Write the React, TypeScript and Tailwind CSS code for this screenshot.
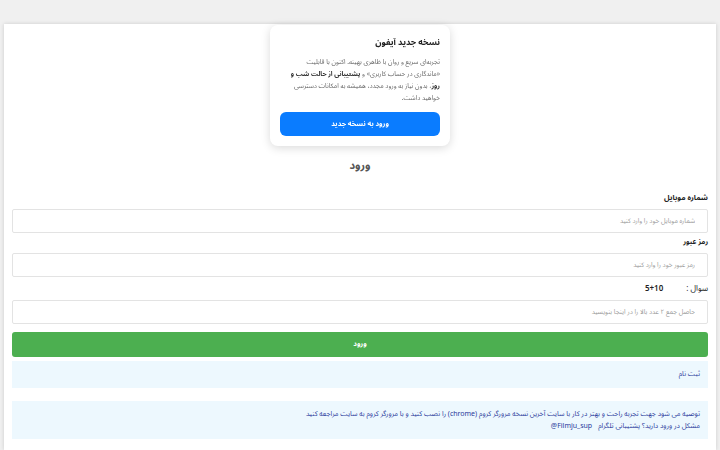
const App = () => {
   return (
      <div
         dir="rtl"
         className="min-h-screen bg-[#f0f0f0] px-1 pt-6 font-['Noto_Sans_Arabic','Noto_Naskh_Arabic','Vazirmatn','Tahoma','DejaVu_Sans',sans-serif] text-[#333]"
      >
         <div className="min-h-[426px] bg-white px-2 pt-[135px] shadow-[0_0_4px_rgba(0,0,0,0.15)]">
            <h1 className="h-[14px] text-center text-[11px] font-bold leading-[14px] text-[#555]">ورود</h1>

            <label className="mt-[19px] block h-[12px] text-[7.5px] font-bold leading-[12px] text-[#222]">شماره موبایل</label>
            <input
               className="mt-[5px] block h-[24px] w-full rounded-[2px] border border-[#e3e3e3] px-3 text-[6.5px] outline-none placeholder:text-[#999]"
               placeholder="شماره موبایل خود را وارد کنید"
            />

            <label className="mt-[3px] block h-[12px] text-[7px] font-bold leading-[12px] text-[#222]">رمز عبور</label>
            <input
               type="password"
               className="mt-[5px] block h-[24px] w-full rounded-[2px] border border-[#e3e3e3] px-3 text-[6.5px] outline-none placeholder:text-[#999]"
               placeholder="رمز عبور خود را وارد کنید"
            />

            <div className="mt-[6px] flex h-[12px] items-center gap-[23px] text-[8px] leading-[12px] text-[#222]">
               <span>سوال :</span>
               <span className="font-semibold" dir="ltr">5+10</span>
            </div>
            <input
               className="mt-[5px] block h-[24px] w-full rounded-[2px] border border-[#e3e3e3] px-3 text-[6.5px] outline-none placeholder:text-[#999]"
               placeholder="حاصل جمع ۲ عدد بالا را در اینجا بنویسید"
            />

            <button className="mt-[8px] flex h-[25px] w-full items-center justify-center rounded-[3px] bg-[#4caf50] text-[7px] font-bold text-white">
               ورود
            </button>

            <div className="mt-[4px] flex h-[27px] items-center bg-[#edf8fe] px-2 text-[7px] text-[#2a3a9c]">
               ثبت نام
            </div>

            <div className="mt-[13px] bg-[#edf8fe] px-2 py-[7px] text-[7px] leading-[12px] text-[#2a3a9c]">
               <p>توصیه می شود جهت تجربه راحت و بهتر در کار با سایت آخرین نسخه مرورگر کروم (chrome) را نصب کنید و با مرورگر کروم به سایت مراجعه کنید</p>
               <p className="flex items-center gap-[6px]">
                  <span>مشکل در ورود دارید؟ پشتیبانی تلگرام</span>
                  <bdi dir="ltr">@Filmju_sup</bdi>
               </p>
            </div>
         </div>

         <div className="fixed left-1/2 top-[25px] w-[180px] -translate-x-1/2 rounded-[8px] bg-white px-[10px] pb-[10px] pt-[11px] shadow-[0_2px_10px_rgba(0,0,0,0.15)]">
            <h2 className="text-[8.5px] font-bold leading-[13px] text-[#222]">نسخه جدید آیفون</h2>
            <p className="mt-[7px] text-[6.5px] leading-[12px] text-[#666]">
               تجربه‌ای سریع و روان با ظاهری بهینه. اکنون با قابلیت «ماندگاری در حساب کاربری» و{" "}
               <b className="text-[#333]">پشتیبانی از حالت شب و روز</b>، بدون نیاز به ورود مجدد، همیشه به امکانات دسترسی خواهید داشت.
            </p>
            <button className="mt-[8px] flex h-[24px] w-full items-center justify-center rounded-[6px] bg-[#0a7cff] text-[7px] font-bold text-white">
               ورود به نسخه جدید
            </button>
         </div>
      </div>
   )
}

export default App
